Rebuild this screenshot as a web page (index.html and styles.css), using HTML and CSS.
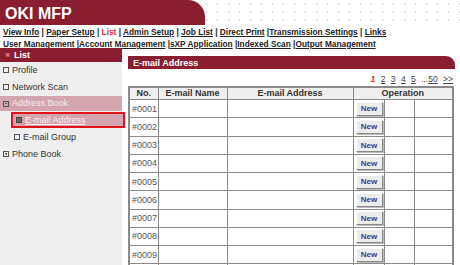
FILE: index.html
```html
<!DOCTYPE html>
<html lang="en">
<head>
    <meta charset="UTF-8">
    <title>OKI MFP - E-mail Address</title>
    <link rel="stylesheet" href="styles.css">
</head>
<body>
    <div class="top">
        <div class="brand">OKI MFP</div>
    </div>
    <div class="nav">
        <div><a href="#">View Info</a> | <a href="#">Paper Setup</a> | <a href="#" class="cur">List</a> | <a href="#">Admin Setup</a> | <a href="#">Job List</a> | <a href="#">Direct Print</a> |<a href="#">Transmission Settings</a> | <a href="#">Links</a></div>
        <div><a href="#">User Management</a> |<a href="#">Account Management</a> |<a href="#">sXP Application</a> |<a href="#">Indexed Scan</a> |<a href="#">Output Management</a></div>
    </div>
    <div class="main">
        <div class="side">
            <div class="side-head"><span class="x">&#x2716;</span>List</div>
            <div class="item"><span class="box"></span>Profile</div>
            <div class="item"><span class="box"></span>Network Scan</div>
            <div class="item open"><span class="box minus"></span>Address Book</div>
            <div class="item sub sel"><span class="box fill"></span><a href="#">E-mail Address</a></div>
            <div class="item sub"><span class="box"></span>E-mail Group</div>
            <div class="item"><span class="box plus"></span>Phone Book</div>
        </div>
        <div class="content">
            <div class="title">E-mail Address</div>
            <div class="pages"><span class="now">1</span> <a href="#">2</a> <a href="#">3</a> <a href="#">4</a> <a href="#">5</a> ...<a href="#">50</a> <a href="#">&gt;&gt;</a></div>
            <table class="list">
                <colgroup>
                    <col style="width:29px"><col style="width:69px"><col style="width:126px"><col style="width:31px"><col style="width:30px"><col>
                </colgroup>
                <tr><th>No.</th><th>E-mail Name</th><th>E-mail Address</th><th colspan="3">Operation</th></tr>
                <tr><td>#0001</td><td></td><td></td><td><button>New</button></td><td></td><td></td></tr>
                <tr><td>#0002</td><td></td><td></td><td><button>New</button></td><td></td><td></td></tr>
                <tr><td>#0003</td><td></td><td></td><td><button>New</button></td><td></td><td></td></tr>
                <tr><td>#0004</td><td></td><td></td><td><button>New</button></td><td></td><td></td></tr>
                <tr><td>#0005</td><td></td><td></td><td><button>New</button></td><td></td><td></td></tr>
                <tr><td>#0006</td><td></td><td></td><td><button>New</button></td><td></td><td></td></tr>
                <tr><td>#0007</td><td></td><td></td><td><button>New</button></td><td></td><td></td></tr>
                <tr><td>#0008</td><td></td><td></td><td><button>New</button></td><td></td><td></td></tr>
                <tr><td>#0009</td><td></td><td></td><td><button>New</button></td><td></td><td></td></tr>
                <tr><td></td><td></td><td></td><td></td><td></td><td></td></tr>
            </table>
        </div>
    </div>
</body>
</html>
```

FILE: styles.css
```css
html, body { margin: 0; height: 265px; overflow: hidden; background: #fff; }
body { font-family: "Liberation Sans", Arial, sans-serif; font-size: 9px; color: #333; }

.top { height: 26px; background-color: #fff; background-image: radial-gradient(circle, #d6d6d6 0.8px, transparent 1.2px); background-size: 11px 8px; background-position: 3px 0; }
.brand { width: 200px; height: 25px; padding-left: 5px; background: #8a1d30; border-top-right-radius: 17px; color: #fff; font-weight: bold; font-size: 16px; line-height: 27px; }

.nav { padding: 0 0 0 3px; font-weight: bold; font-size: 8.3px; line-height: 12px; color: #222; }
.nav a { color: #222; }
.nav a.cur { color: #e0303a; text-decoration: none; }

.main { display: flex; gap: 6px; margin-top: -2px; }
.side { width: 122px; height: 220px; background: #efefef; }
.side-head { height: 14px; background: #8a1d30; color: #fff; font-weight: bold; line-height: 14px; padding-left: 5px; }
.side-head .x { color: #e86a86; font-size: 6px; margin-right: 4px; vertical-align: 1px; }
.item { height: 16.5px; line-height: 16.5px; padding-left: 3px; display: flex; align-items: center; color: #333; }
.item.sub { padding-left: 14px; }
.item.open { background: #d3a6af; color: #f6eaec; margin-top: 1px; height: 15px; }
.item.sel { background: #d3a6af; border: 2px solid #e0141e; height: 12px; margin: 1px -3px 1px 11px; padding-left: 3px; }
.item.sel a { color: #f8eef0; }
.box { width: 4px; height: 4px; border: 1px solid #555; margin-right: 3px; position: relative; flex: none; }
.box.minus::after, .box.plus::after { content: ""; position: absolute; left: 1px; top: 1.5px; width: 2px; height: 1px; background: #555; }
.box.plus::before { content: ""; position: absolute; left: 1.5px; top: 1px; width: 1px; height: 2px; background: #555; }
.box.fill { background: #666; border-color: #444; }

.content { width: 327px; padding-top: 8px; }
.title { height: 13px; background: #8a1d30; border-top-right-radius: 9px; color: #fff; font-weight: bold; line-height: 14px; padding-left: 5px; }
.pages { text-align: right; padding: 5px 2px 0 0; height: 12px; font-size: 8.5px; word-spacing: 3px; }
.pages a { color: #444; }
.pages .now { color: #e0303a; font-weight: bold; font-style: italic; }

.list { border-collapse: collapse; width: 326px; table-layout: fixed; border: 2px solid #8a8a8a; }
.list th, .list td { border: 1px solid #8a8a8a; padding: 0 2px; overflow: hidden; white-space: nowrap; }
.list th { height: 11px; line-height: 11px; background: #efefef; font-weight: bold; color: #333; }
.list td { height: 17.25px; color: #555; }
.list button { font-family: inherit; font-size: 8px; font-weight: bold; color: #3b3b92; background: #ececec; border: 1px solid; border-color: #fff #888 #888 #fff; box-shadow: 1px 1px 0 #bbb; padding: 0 3px; height: 14px; width: 27px; }
```
